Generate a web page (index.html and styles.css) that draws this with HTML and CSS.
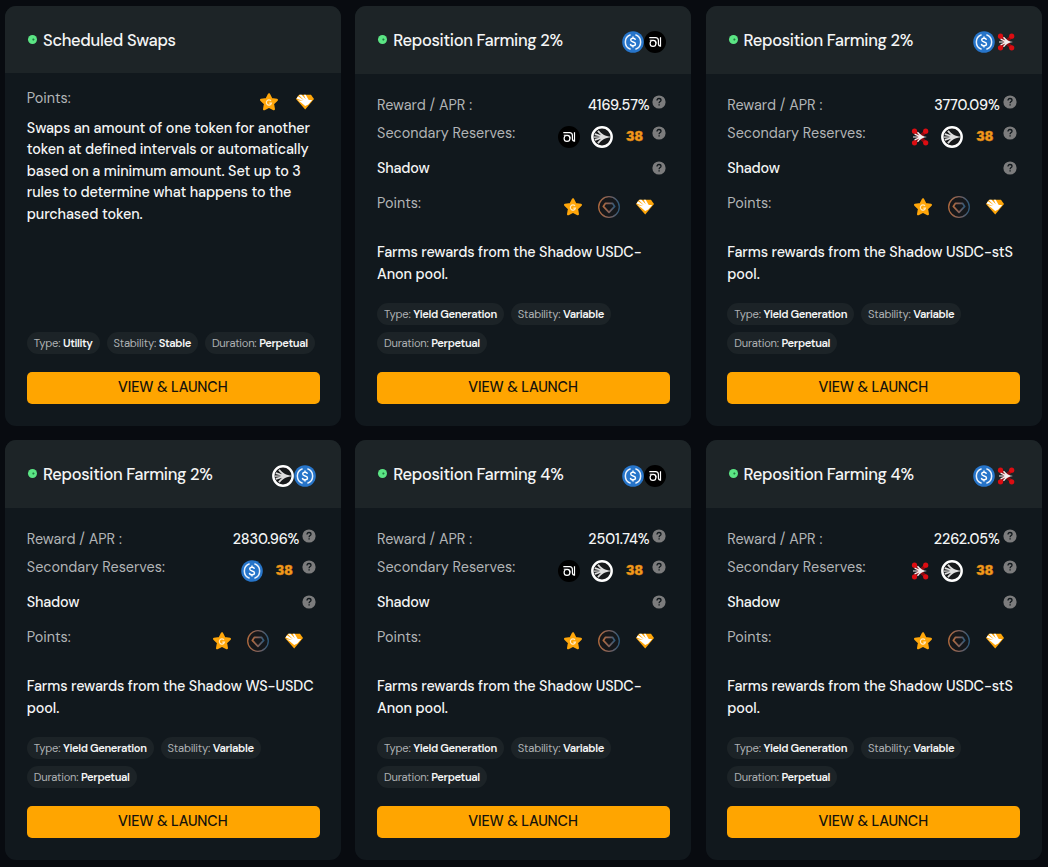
FILE: index.html
```
<!DOCTYPE html>
<html lang="en">
<head>
  <meta charset="UTF-8">
  <meta name="viewport" content="width=device-width, initial-scale=1.0">
  <title>Strategies</title>
  <link rel="stylesheet" href="styles.css">
</head>
<body>
  <!-- Icon sprite -->
  <svg class="sprite" xmlns="http://www.w3.org/2000/svg">
    <symbol id="usdc" viewBox="0 0 22 22">
      <circle cx="11" cy="11" r="10.8" fill="#2775ca"/>
      <path d="M8.6 3.700a7.700 7.700 0 0 0 0 14.600M13.400 3.700a7.700 7.700 0 0 1 0 14.600" fill="none" stroke="#e8f1fb" stroke-width="1.500"/>
      <path d="M13.400 8.900c-.2-1.200-1.100-1.700-2.400-1.700s-2.300.6-2.300 1.800c0 2.600 4.800 1.300 4.800 4 0 1.200-1 1.800-2.500 1.800s-2.500-.7-2.600-1.900M11 5.500v1.700M11 14.800v1.700" fill="none" stroke="#fff" stroke-width="1.400"/>
    </symbol>
    <symbol id="anon" viewBox="0 0 22 22">
      <circle cx="11" cy="11" r="11" fill="#000"/>
      <path d="M5.300 6.700h6.200c2 0 2.900 1 2.900 2.900v3.200c0 1.600.6 2.400 2.100 2.400V6.200" fill="none" stroke="#fff" stroke-width="1.200"/>
      <path d="M5.800 9.300h3.700c1.700 0 2.600 1.100 2.600 3.100" fill="none" stroke="#fff" stroke-width="1.100"/>
      <circle cx="9" cy="12.400" r="2.900" fill="none" stroke="#fff" stroke-width="1.200"/>
    </symbol>
    <symbol id="sonic" viewBox="0 0 22 22">
      <circle cx="11" cy="11" r="9.700" fill="#17191b" stroke="#fff" stroke-width="2.400"/>
      <path d="M20 10.700C14 10.300 10.500 8 7.700 4.200L6.200 5.400 10 9.300 4.200 7.200 3.400 9l5.800 1.500L2.500 10.600v1.200l6.700-.2L3.400 13l.8 1.800 5.800-2.100-3.800 3.900 1.500 1.200c2.800-3.800 6.300-6.100 12.300-6.500z" fill="#dedede"/>
    </symbol>
    <symbol id="sts" viewBox="0 0 22 22">
      <path d="M6 6l10 10M16 6L6 16" stroke="#8c0b10" stroke-width="3.400"/>
      <g fill="#dc0d12">
        <circle cx="5.500" cy="5.200" r="2.600"/><circle cx="16.700" cy="5.200" r="2.600"/>
        <circle cx="5.500" cy="16.800" r="2.600"/><circle cx="16.700" cy="16.800" r="2.600"/>
      </g>
      <path d="M18 11c-4-.4-6.500-2-9-5.200l-1 .9 2.400 2.800-4.600-2-.4 1.300 4.200 1.600L4 10.500v1l5.600.1-4.200 1.600.4 1.300 4.600-2L8 15.300l1 .9c2.500-3.200 5-4.800 9-5.200z" fill="#f4eeee"/>
    </symbol>
    <symbol id="star" viewBox="0 0 22 22">
      <path d="M11 3.300l2.400 4.800 5.500.8-3.900 3.900.9 5.400L11 15.800l-4.900 2.400.9-5.400L3.100 8.900l5.500-.8z" fill="#ffa60a" stroke="#ffa60a" stroke-width="2.200" stroke-linejoin="round"/>
      <path d="M13 9.900a2.600 2.600 0 1 0 .5 2.200H11.300" fill="none" stroke="#ffe9bd" stroke-width="1.200"/>
    </symbol>
    <symbol id="ring" viewBox="0 0 22 22">
      <linearGradient id="ring-fill" x1="0" x2="1"><stop offset="0" stop-color="#b06a3e"/><stop offset=".5" stop-color="#80605a"/><stop offset="1" stop-color="#2d597b"/></linearGradient>
      <circle cx="11" cy="11" r="10.300" fill="#15171a" stroke="url(#ring-fill)" stroke-width="1.300"/>
      <path d="M7.500 7.300h7l2.200 3.100-5.700 5.900-5.700-5.900z" fill="none" stroke="url(#ring-fill)" stroke-width="1.700" stroke-linejoin="round"/>
    </symbol>
    <symbol id="gem" viewBox="0 0 22 22">
      <path d="M5 3.800h12l3 4.300L11.200 18.400 2 8.100z" fill="#ffa60a"/>
      <path d="M2.500 7.400L4 5.300l6 4-5-5 .8-.5h1.700l4.300 4.400-2-4.400h1.900l2.600 4.400c.4.700.8.900 1.600.8l2.300-.1-3.900 4.600-3.100 1.600L7 11.600 3.600 9.300l5.500.8z" fill="#fff"/>
    </symbol>
    <symbol id="help" viewBox="0 0 14 14">
      <circle cx="7" cy="7" r="6.600" fill="#7c7c7d"/>
      <path d="M5 5.600C5 4.300 5.800 3.500 7 3.500s2 .7 2 1.700C9 6.600 7.100 6.600 7.100 8.300M7.100 9.300v1.300" fill="none" stroke="#11181c" stroke-width="1.300"/>
    </symbol>
  </svg>

  <main class="grid">
    <section class="card swaps">
      <header>
        <h3><span class="dot"></span>Scheduled Swaps</h3>
      </header>
      <div class="body">
        <div class="row points"><span>Points:</span>
          <div class="icons"><svg><use href="#star"/></svg><svg><use href="#gem"/></svg></div>
        </div>
        <p class="desc">Swaps an amount of one token for another<br>token at defined intervals or automatically<br>based on a minimum amount. Set up to 3<br>rules to determine what happens to the<br>purchased token.</p>
        <div class="tags">
          <span>Type: <b>Utility</b></span><span>Stability: <b>Stable</b></span><span>Duration: <b>Perpetual</b></span>
        </div>
        <button>VIEW &amp; LAUNCH</button>
      </div>
    </section>

    <section class="card">
      <header>
        <h3><span class="dot"></span>Reposition Farming 2%</h3>
        <div class="pair"><svg><use href="#usdc"/></svg><svg><use href="#anon"/></svg></div>
      </header>
      <div class="body">
        <div class="row apr"><span>Reward / APR :</span><strong>4169.57%</strong><svg class="help"><use href="#help"/></svg></div>
        <div class="row"><span>Secondary Reserves:</span>
          <div class="icons"><svg><use href="#anon"/></svg><svg><use href="#sonic"/></svg><i class="digits">38</i></div>
          <svg class="help"><use href="#help"/></svg>
        </div>
        <div class="row dex"><span>Shadow</span><svg class="help"><use href="#help"/></svg></div>
        <div class="row points"><span>Points:</span>
          <div class="icons"><svg><use href="#star"/></svg><svg><use href="#ring"/></svg><svg><use href="#gem"/></svg></div>
        </div>
        <p class="desc">Farms rewards from the Shadow USDC-<br>Anon pool.</p>
        <div class="tags">
          <span>Type: <b>Yield Generation</b></span><span>Stability: <b>Variable</b></span><span>Duration: <b>Perpetual</b></span>
        </div>
        <button>VIEW &amp; LAUNCH</button>
      </div>
    </section>

    <section class="card">
      <header>
        <h3><span class="dot"></span>Reposition Farming 2%</h3>
        <div class="pair"><svg><use href="#usdc"/></svg><svg><use href="#sts"/></svg></div>
      </header>
      <div class="body">
        <div class="row apr"><span>Reward / APR :</span><strong>3770.09%</strong><svg class="help"><use href="#help"/></svg></div>
        <div class="row"><span>Secondary Reserves:</span>
          <div class="icons"><svg><use href="#sts"/></svg><svg><use href="#sonic"/></svg><i class="digits">38</i></div>
          <svg class="help"><use href="#help"/></svg>
        </div>
        <div class="row dex"><span>Shadow</span><svg class="help"><use href="#help"/></svg></div>
        <div class="row points"><span>Points:</span>
          <div class="icons"><svg><use href="#star"/></svg><svg><use href="#ring"/></svg><svg><use href="#gem"/></svg></div>
        </div>
        <p class="desc">Farms rewards from the Shadow USDC-stS<br>pool.</p>
        <div class="tags">
          <span>Type: <b>Yield Generation</b></span><span>Stability: <b>Variable</b></span><span>Duration: <b>Perpetual</b></span>
        </div>
        <button>VIEW &amp; LAUNCH</button>
      </div>
    </section>

    <section class="card">
      <header>
        <h3><span class="dot"></span>Reposition Farming 2%</h3>
        <div class="pair"><svg><use href="#sonic"/></svg><svg><use href="#usdc"/></svg></div>
      </header>
      <div class="body">
        <div class="row apr"><span>Reward / APR :</span><strong>2830.96%</strong><svg class="help"><use href="#help"/></svg></div>
        <div class="row"><span>Secondary Reserves:</span>
          <div class="icons"><svg><use href="#usdc"/></svg><i class="digits">38</i></div>
          <svg class="help"><use href="#help"/></svg>
        </div>
        <div class="row dex"><span>Shadow</span><svg class="help"><use href="#help"/></svg></div>
        <div class="row points"><span>Points:</span>
          <div class="icons"><svg><use href="#star"/></svg><svg><use href="#ring"/></svg><svg><use href="#gem"/></svg></div>
        </div>
        <p class="desc">Farms rewards from the Shadow WS-USDC<br>pool.</p>
        <div class="tags">
          <span>Type: <b>Yield Generation</b></span><span>Stability: <b>Variable</b></span><span>Duration: <b>Perpetual</b></span>
        </div>
        <button>VIEW &amp; LAUNCH</button>
      </div>
    </section>

    <section class="card">
      <header>
        <h3><span class="dot"></span>Reposition Farming 4%</h3>
        <div class="pair"><svg><use href="#usdc"/></svg><svg><use href="#anon"/></svg></div>
      </header>
      <div class="body">
        <div class="row apr"><span>Reward / APR :</span><strong>2501.74%</strong><svg class="help"><use href="#help"/></svg></div>
        <div class="row"><span>Secondary Reserves:</span>
          <div class="icons"><svg><use href="#anon"/></svg><svg><use href="#sonic"/></svg><i class="digits">38</i></div>
          <svg class="help"><use href="#help"/></svg>
        </div>
        <div class="row dex"><span>Shadow</span><svg class="help"><use href="#help"/></svg></div>
        <div class="row points"><span>Points:</span>
          <div class="icons"><svg><use href="#star"/></svg><svg><use href="#ring"/></svg><svg><use href="#gem"/></svg></div>
        </div>
        <p class="desc">Farms rewards from the Shadow USDC-<br>Anon pool.</p>
        <div class="tags">
          <span>Type: <b>Yield Generation</b></span><span>Stability: <b>Variable</b></span><span>Duration: <b>Perpetual</b></span>
        </div>
        <button>VIEW &amp; LAUNCH</button>
      </div>
    </section>

    <section class="card">
      <header>
        <h3><span class="dot"></span>Reposition Farming 4%</h3>
        <div class="pair"><svg><use href="#usdc"/></svg><svg><use href="#sts"/></svg></div>
      </header>
      <div class="body">
        <div class="row apr"><span>Reward / APR :</span><strong>2262.05%</strong><svg class="help"><use href="#help"/></svg></div>
        <div class="row"><span>Secondary Reserves:</span>
          <div class="icons"><svg><use href="#sts"/></svg><svg><use href="#sonic"/></svg><i class="digits">38</i></div>
          <svg class="help"><use href="#help"/></svg>
        </div>
        <div class="row dex"><span>Shadow</span><svg class="help"><use href="#help"/></svg></div>
        <div class="row points"><span>Points:</span>
          <div class="icons"><svg><use href="#star"/></svg><svg><use href="#ring"/></svg><svg><use href="#gem"/></svg></div>
        </div>
        <p class="desc">Farms rewards from the Shadow USDC-stS<br>pool.</p>
        <div class="tags">
          <span>Type: <b>Yield Generation</b></span><span>Stability: <b>Variable</b></span><span>Duration: <b>Perpetual</b></span>
        </div>
        <button>VIEW &amp; LAUNCH</button>
      </div>
    </section>
  </main>
</body>
</html>
```
FILE: styles.css
```
* { box-sizing: border-box; }
body { margin: 0; background: #080b10; color: #f4f5f5; font-family: "DM Sans", Inter, sans-serif; font-size: 14.4px; }
svg { display: block; width: 22px; height: 22px; flex: none; }
.sprite { position: absolute; width: 0; height: 0; }
.digits { width: 22px; font: 900 12.5px/22px Inter, sans-serif; text-align: center; color: #f39a1c; -webkit-text-stroke: 0.4px #d98212; }

.grid { display: grid; grid-template-columns: repeat(3, 336px); grid-auto-rows: 420px; gap: 14px 14.25px; padding: 6px 6px 7px 5px; }
.card { display: flex; flex-direction: column; background: #11181d; border-radius: 11px; overflow: hidden; }
.card header { height: 68px; flex: none; display: flex; align-items: center; justify-content: space-between; padding: 0 25px 0 23px; background: #1d2427; }
.swaps header { height: 67px; }
h3 { margin: 2px 0 0; display: flex; align-items: center; font-size: 16.5px; font-weight: 500; line-height: 24px; letter-spacing: -0.3px; white-space: nowrap; }
.dot { width: 9px; height: 9px; margin: 0 6px 3px 0; border-radius: 50%; background: radial-gradient(circle at 60% 50%, #1f7a42 0.5px, #5be584 1.5px); }
.pair { display: flex; margin-top: 4px; }

.body { flex: 1; display: flex; flex-direction: column; padding: 17px 21.2px 22px 21.8px; }
.swaps .body { padding-top: 11px; }
.row { display: flex; align-items: center; height: 28px; flex: none; padding-right: 3.6px; white-space: nowrap; }
.row > span { margin-right: auto; color: #b1b4b6; }
.row strong { font-weight: 500; letter-spacing: -0.1px; }
.help { width: 14px; height: 14px; margin-left: 7px; }
.apr .help { margin: 0 0 6px 3px; }
.icons { display: flex; gap: 10.5px; margin-top: 8px; }
.dex { height: 42px; }
.dex > span { color: #f4f5f5; font-weight: 550; letter-spacing: -0.2px; }
.points { padding-right: 14.4px; }
.points .icons { gap: 14px; }
.swaps .points { padding-right: 4px; }

.desc { margin: 25px 0 0; line-height: 21.6px; font-weight: 550; letter-spacing: -0.11px; white-space: nowrap; }
.swaps .desc { margin-top: 5.5px; }

.tags { display: flex; flex-wrap: wrap; gap: 7px; margin: auto -8px 18px 0; }
.tags span { height: 22px; padding: 0 7px; border-radius: 11px; background: #1c2327; color: #aeb1b3; font-size: 11.2px; line-height: 22px; letter-spacing: -0.23px; white-space: nowrap; }
.tags b { color: #f4f5f5; font-weight: 600; letter-spacing: -0.39px; }

button { height: 32px; flex: none; padding: 0 7px 2px 6px; border: 0; border-radius: 5px; background: #ffa500; color: #14120c; font-family: inherit; font-size: 14.4px; font-weight: 550; letter-spacing: -0.12px; }
```
